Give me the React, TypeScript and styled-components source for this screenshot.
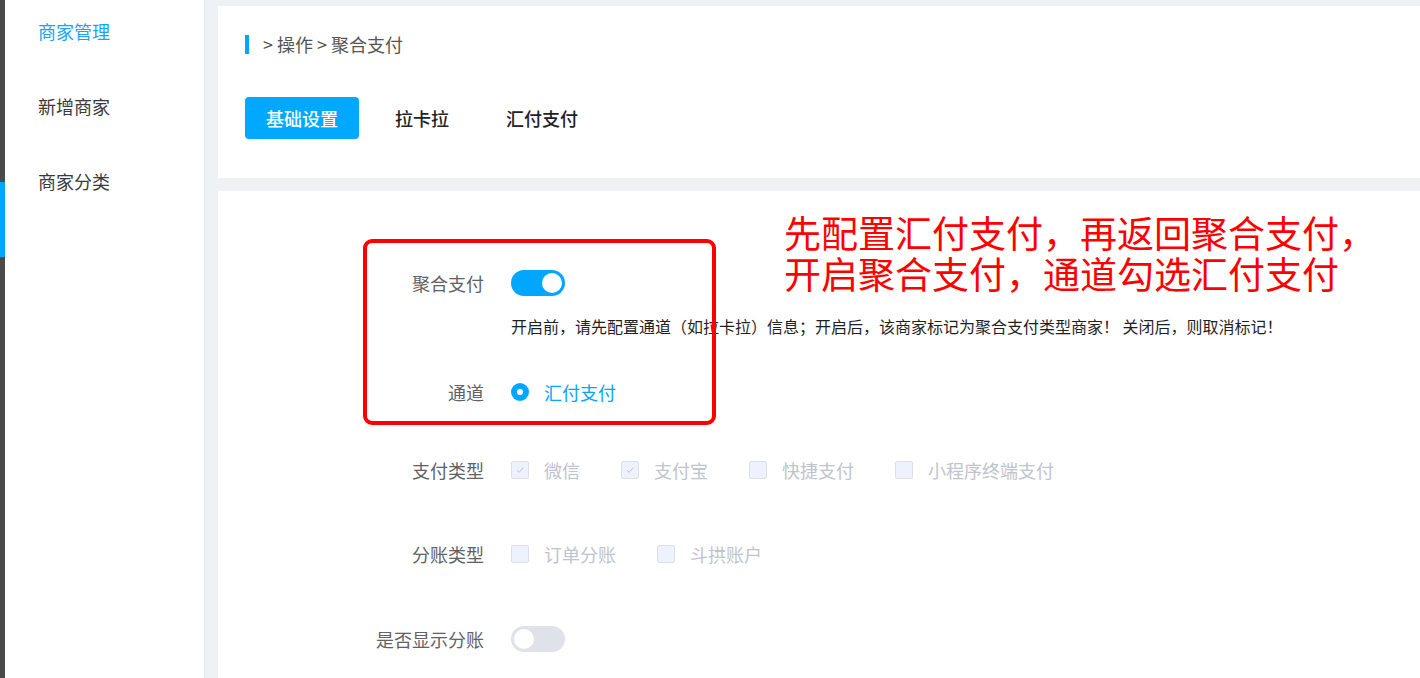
import React from "react";
import styled, { createGlobalStyle } from "styled-components";

const GlobalStyle = createGlobalStyle`
  html, body { margin: 0; padding: 0; }
  body {
    font-family: "Noto Sans CJK SC", "Noto Sans", sans-serif;
    background: #eef2f5;
    overflow: hidden;
  }
`;

const Page = styled.div`
  display: flex;
  height: 678px;
  width: 1420px;
  overflow: hidden;
  position: relative;
`;

const Rail = styled.div`
  width: 5px;
  display: flex;
  flex-direction: column;
  background: #4a4a4a;
`;

const RailGap = styled.div`
  height: 182px;
`;

const RailActive = styled.div`
  height: 75px;
  background: #00a6ff;
`;

const Sidebar = styled.nav`
  width: 199px;
  background: #ffffff;
  border-right: 1px solid #e3e5e8;
  display: flex;
  flex-direction: column;
`;

const MenuList = styled.ul`
  list-style: none;
  margin: -7px 0 0;
  padding: 0;
`;

const MenuItem = styled.li<{ $active?: boolean }>`
  height: 75px;
  display: flex;
  align-items: center;
  padding-left: 33px;
  font-size: 18px;
  color: ${(p) => (p.$active ? "#1aa3f3" : "#3a3a3a")};
`;

const Main = styled.main`
  flex: 1;
  display: flex;
  flex-direction: column;
  gap: 13px;
  padding: 6px 0 0 13px;
  min-width: 0;
`;

const Card = styled.section`
  background: #ffffff;
`;

const HeaderCard = styled(Card)`
  padding: 26px 27px 39px;
`;

const Crumbs = styled.div`
  display: flex;
  align-items: center;
  height: 24px;
  font-size: 18px;
  color: #555;
  gap: 14px;
`;

const CrumbMark = styled.span`
  width: 4px;
  height: 19px;
  background: #00a6ff;
`;

const Tabs = styled.div`
  display: flex;
  gap: 15px;
  margin-top: 41px;
`;

const Tab = styled.button<{ $active?: boolean }>`
  height: 42px;
  padding: 0 21px;
  border: none;
  border-radius: 4px;
  font-family: inherit;
  font-size: 18px;
  font-weight: 500;
  background: ${(p) => (p.$active ? "#00a9ff" : "transparent")};
  color: ${(p) => (p.$active ? "#ffffff" : "#222")};
  cursor: pointer;
`;

const FormCard = styled(Card)`
  flex: 1;
  padding-top: 72px;
`;

const FormItem = styled.div<{ $mt?: number }>`
  display: flex;
  margin-top: ${(p) => p.$mt ?? 0}px;
`;

const Label = styled.label`
  width: 293px;
  padding-right: 27px;
  box-sizing: border-box;
  text-align: right;
  font-size: 18px;
  line-height: 40px;
  color: #606266;
  flex-shrink: 0;
`;

const Control = styled.div`
  display: flex;
  flex-direction: column;
`;

const ControlLine = styled.div`
  display: flex;
  align-items: center;
  height: 40px;
`;

const Switch = styled.span<{ $on?: boolean }>`
  position: relative;
  width: 54px;
  height: 26px;
  border-radius: 13px;
  background: ${(p) => (p.$on ? "#00a6ff" : "#dfe2e8")};
  &::after {
    content: "";
    position: absolute;
    top: 3px;
    left: ${(p) => (p.$on ? "31px" : "3px")};
    width: 20px;
    height: 20px;
    border-radius: 50%;
    background: #fff;
  }
`;

const Hint = styled.div`
  margin-top: 11px;
  font-size: 16px;
  line-height: 24px;
  color: #1f1f1f;
  white-space: nowrap;
`;

const Radio = styled.span`
  width: 18px;
  height: 18px;
  border-radius: 50%;
  background: #00a6ff;
  display: flex;
  align-items: center;
  justify-content: center;
  margin-right: 15px;
  &::after {
    content: "";
    width: 6px;
    height: 6px;
    border-radius: 50%;
    background: #fff;
  }
`;

const RadioText = styled.span`
  font-size: 18px;
  color: #00a6ff;
`;

const CheckGroup = styled.div`
  display: flex;
  align-items: center;
  gap: 41px;
  height: 40px;
`;

const Check = styled.span`
  display: flex;
  align-items: center;
  gap: 15px;
  font-size: 18px;
  color: #c0c4cc;
`;

const Box = styled.span`
  width: 16px;
  height: 16px;
  border: 1px solid #dcdfe6;
  border-radius: 2px;
  background: #edf2fc;
  display: flex;
  align-items: center;
  justify-content: center;
`;

const Overlay = styled.div`
  position: absolute;
  left: 363px;
  top: 239px;
  width: 353px;
  height: 186px;
  box-sizing: border-box;
  border: 4px solid #ff0000;
  border-radius: 9px;
  pointer-events: none;
`;

const Note = styled.div`
  position: absolute;
  left: 784px;
  top: 212px;
  display: flex;
  flex-direction: column;
  color: #ff0000;
`;

const NoteLine = styled.div`
  font-size: 37px;
  height: 41px;
  line-height: 41px;
  white-space: nowrap;
`;

const CheckBox: React.FC<{ checked?: boolean; label: string }> = ({ checked, label }) => (
  <Check>
    <Box>
      {checked && (
        <svg width="10" height="10" viewBox="0 0 10 10">
          <path d="M2 5.2 L4.2 7.3 L8.2 2.6" fill="none" stroke="#c0c4cc" strokeWidth="1" />
        </svg>
      )}
    </Box>
    {label}
  </Check>
);

export default function App() {
  return (
    <>
      <GlobalStyle />
      <Page>
        <Rail>
          <RailGap />
          <RailActive />
        </Rail>
        <Sidebar>
          <MenuList>
            <MenuItem $active>商家管理</MenuItem>
            <MenuItem>新增商家</MenuItem>
            <MenuItem>商家分类</MenuItem>
          </MenuList>
        </Sidebar>
        <Main>
          <HeaderCard>
            <Crumbs>
              <CrumbMark />
              <span>&gt; 操作 &gt; 聚合支付</span>
            </Crumbs>
            <Tabs>
              <Tab $active>基础设置</Tab>
              <Tab>拉卡拉</Tab>
              <Tab>汇付支付</Tab>
            </Tabs>
          </HeaderCard>
          <FormCard>
            <FormItem>
              <Label>聚合支付</Label>
              <Control>
                <ControlLine>
                  <Switch $on />
                </ControlLine>
                <Hint>
                  开启前，请先配置通道（如拉卡拉）信息；开启后，该商家标记为聚合支付类型商家！ 关闭后，则取消标记！
                </Hint>
              </Control>
            </FormItem>
            <FormItem $mt={34}>
              <Label>通道</Label>
              <ControlLine>
                <Radio />
                <RadioText>汇付支付</RadioText>
              </ControlLine>
            </FormItem>
            <FormItem $mt={38}>
              <Label>支付类型</Label>
              <CheckGroup>
                <CheckBox checked label="微信" />
                <CheckBox checked label="支付宝" />
                <CheckBox label="快捷支付" />
                <CheckBox label="小程序终端支付" />
              </CheckGroup>
            </FormItem>
            <FormItem $mt={44}>
              <Label>分账类型</Label>
              <CheckGroup>
                <CheckBox label="订单分账" />
                <CheckBox label="斗拱账户" />
              </CheckGroup>
            </FormItem>
            <FormItem $mt={45}>
              <Label>是否显示分账</Label>
              <ControlLine>
                <Switch />
              </ControlLine>
            </FormItem>
          </FormCard>
        </Main>
        <Overlay />
        <Note>
          <NoteLine>先配置汇付支付，再返回聚合支付，</NoteLine>
          <NoteLine>开启聚合支付，通道勾选汇付支付</NoteLine>
        </Note>
      </Page>
    </>
  );
}
